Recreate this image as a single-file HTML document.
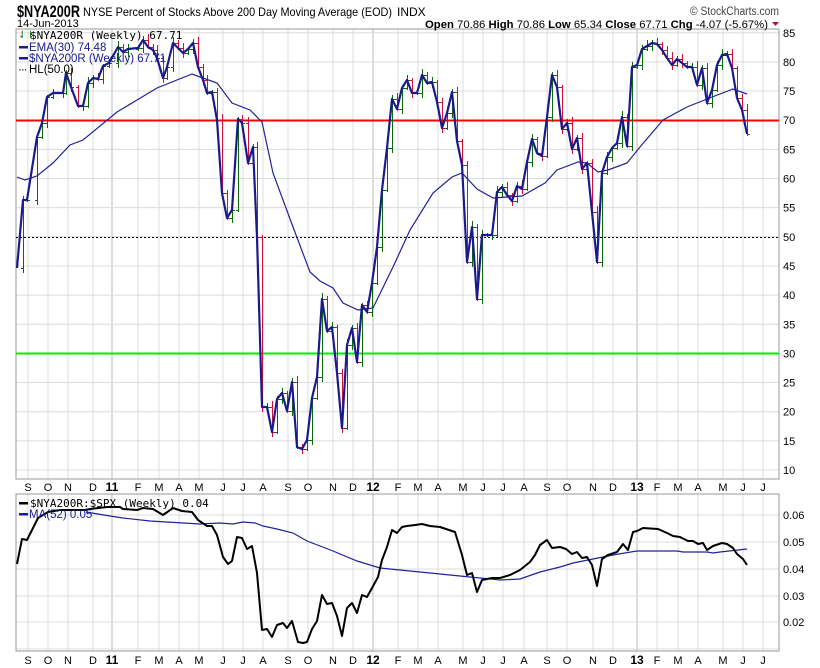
<!DOCTYPE html>
<html><head><meta charset="utf-8"><style>
html,body{margin:0;padding:0;background:#fff;}
body{width:820px;height:668px;overflow:hidden;}
svg{display:block;}
text{font-family:"Liberation Sans",sans-serif;}
.m{font-family:"DejaVu Sans Mono","Liberation Mono",monospace;}
</style></head><body>
<svg id="s" width="820" height="668" xmlns="http://www.w3.org/2000/svg">
<rect width="820" height="668" fill="#fff"/>
<g id="grid"></g>
<rect x="16" y="29" width="763" height="450" fill="none" stroke="#999"/>
<rect x="16" y="494" width="763" height="157" fill="none" stroke="#999"/>
<line x1="16" y1="120.5" x2="779" y2="120.5" stroke="#f00" stroke-width="2"/>
<line x1="16" y1="353.5" x2="779" y2="353.5" stroke="#0e0" stroke-width="2"/>
<line x1="16" y1="237.5" x2="779" y2="237.5" stroke="#000" stroke-width="1" stroke-dasharray="2,2"/>
<g id="bars"></g>
<polyline id="ema" fill="none" stroke="#22229a" stroke-width="1.2"/>
<polyline id="px" fill="none" stroke="#1a1a8c" stroke-width="2.2" stroke-linejoin="round"/>
<polyline id="ma" fill="none" stroke="#22229a" stroke-width="1.2"/>
<polyline id="rt" fill="none" stroke="#000" stroke-width="2" stroke-linejoin="round"/>
<g id="lab" font-size="11" fill="#000"></g>

<text x="17" y="17" font-size="17" font-weight="bold" textLength="63" lengthAdjust="spacingAndGlyphs">$NYA200R</text>
<text x="83" y="16" font-size="12" textLength="309" lengthAdjust="spacingAndGlyphs">NYSE Percent of Stocks Above 200 Day Moving Average (EOD)</text>
<text x="397" y="16" font-size="12">INDX</text>
<text x="17" y="27" font-size="11">14-Jun-2013</text>
<text x="690" y="15" font-size="11.5" fill="#444" textLength="89" lengthAdjust="spacingAndGlyphs">© StockCharts.com</text>
<text x="425" y="28" font-size="11" textLength="343" lengthAdjust="spacingAndGlyphs"><tspan font-weight="bold">Open</tspan> 70.86  <tspan font-weight="bold">High</tspan> 70.86  <tspan font-weight="bold">Low</tspan> 65.34  <tspan font-weight="bold">Close</tspan> 67.71  <tspan font-weight="bold">Chg</tspan> -4.07 (-5.67%)</text>
<polygon points="772,22 779,22 775.5,26" fill="#b0103a"/>

<g font-size="11.5" class="m">
<text x="18" y="38" fill="#060" font-size="10">⇃⇂</text>
<text x="30" y="39" class="m" font-size="11">$NYA200R (Weekly) 67.71</text>
<rect x="19" y="46" width="9" height="2.5" fill="#1a1a8c"/>
<text x="29" y="51" fill="#1a1a8c" font-family="Liberation Sans">EMA(30) 74.48</text>
<rect x="19" y="57" width="9" height="2.5" fill="#1a1a8c"/>
<text x="29" y="62" fill="#1a1a8c" font-family="Liberation Sans">$NYA200R (Weekly) 67.71</text>
<text x="18" y="73" font-family="Liberation Sans" letter-spacing="-1">···</text>
<text x="29" y="73" font-family="Liberation Sans">HL(50.0)</text>
<rect x="19" y="502" width="9" height="2.5" fill="#000"/>
<text x="30" y="507" class="m" font-size="11">$NYA200R:$SPX (Weekly) 0.04</text>
<rect x="19" y="513" width="9" height="2.5" fill="#1a1a8c"/>
<text x="29" y="518" fill="#1a1a8c" font-family="Liberation Sans">MA(52) 0.05</text>
</g>
</svg>
<script>
(function(){
var NS="http://www.w3.org/2000/svg";
function el(p,t,a,txt){var e=document.createElementNS(NS,t);for(var k in a)e.setAttribute(k,a[k]);if(txt!=null)e.textContent=txt;document.getElementById(p).appendChild(e);return e;}
var months=[["S",28],["O",48],["N",68],["D",93],["11",112],["F",138],["M",159],["A",179],["M",199],["J",223],["J",243],["A",263],["S",288],["O",308],["N",333],["D",353],["12",373],["F",398],["M",418],["A",438],["M",463],["J",483],["J",503],["A",524],["S",547],["O",567],["N",593],["D",613],["13",637],["F",657],["M",678],["A",698],["M",723],["J",743],["J",763]];
months.forEach(function(m){
 var yr=m[0].length==2;
 el("grid","line",{x1:m[1],y1:29,x2:m[1],y2:479,stroke:yr?"#b8b8b8":"#dcdcdc"});
 el("grid","line",{x1:m[1],y1:494,x2:m[1],y2:651,stroke:yr?"#b8b8b8":"#dcdcdc"});
 [487,660].forEach(function(y){el("lab","text",{x:m[1],y:y+4,"text-anchor":"middle","font-weight":yr?"bold":"normal","font-size":yr?"12":"11"},m[0]);});
});
for(var v=10;v<=85;v+=5){var y=470-(v-10)*5.83;el("grid","line",{x1:16,y1:y,x2:779,y2:y,stroke:"#dcdcdc"});el("lab","text",{x:783,y:y+4},String(v));}
[[0.06,515],[0.05,542],[0.04,569],[0.03,596],[0.02,622],[0.01,649]].forEach(function(a){el("grid","line",{x1:16,y1:a[1],x2:779,y2:a[1],stroke:"#dcdcdc"});if(a[0]>0.015)el("lab","text",{x:783,y:a[1]+4},a[0].toFixed(2));});
var P=[[17,268],[23,200],[27,200],[37,137],[42,123],[47,97],[53,93],[63,93],[66,73],[71,87],[78,106],[83,106],[88,83],[93,78],[98,79],[103,66],[109,63],[118,47],[123,52],[128,49],[138,48],[143,40],[148,47],[153,50],[157,58],[163,78],[167,67],[173,43],[178,48],[183,53],[188,49],[193,43],[198,67],[203,80],[207,93],[212,92],[217,120],[222,193],[227,218],[232,210],[238,119],[242,123],[248,163],[253,147],[257,237],[262,407],[267,407],[272,432],[277,399],[282,393],[287,411],[292,382],[297,447],[302,449],[307,440],[312,398],[317,377],[322,299],[327,331],[332,327],[337,373],[342,428],[347,345],[352,328],[357,362],[362,305],[367,312],[372,283],[377,247],[382,190],[387,148],[392,99],[397,109],[402,88],[407,80],[412,93],[417,93],[422,75],[427,83],[432,82],[437,102],[442,128],[447,113],[452,92],[457,141],[462,165],[467,262],[472,227],[477,299],[482,235],[487,235],[492,235],[497,192],[502,187],[507,195],[512,201],[517,186],[522,189],[527,162],[532,139],[537,153],[542,156],[547,117],[552,75],[557,87],[562,129],[567,123],[572,149],[577,138],[582,169],[587,163],[592,212],[597,262],[602,173],[607,157],[612,148],[617,143],[622,117],[627,146],[632,67],[637,65],[642,49],[647,46],[652,43],[657,44],[662,50],[667,58],[672,65],[677,59],[682,63],[687,67],[692,67],[697,85],[702,68],[707,103],[712,90],[717,65],[722,55],[727,54],[732,68],[737,98],[742,110],[747,134]];
var E=[[17,177],[25,180],[37,176],[53,163],[70,145],[83,140],[117,112],[137,100],[157,88],[192,74],[217,83],[232,103],[250,110],[262,122],[273,173],[293,227],[310,272],[320,281],[333,288],[343,303],[358,310],[373,308],[393,267],[410,230],[433,193],[452,177],[462,173],[477,189],[493,198],[522,196],[545,183],[557,170],[578,162],[587,163],[598,172],[608,170],[627,163],[640,147],[663,120],[687,107],[707,99],[733,89],[747,94]];
var R=[[17,564],[22,539],[27,540],[38,518],[48,512],[60,510],[75,510],[85,510],[90,509],[107,507],[120,507],[123,509],[137,510],[143,508],[153,509],[163,515],[173,508],[182,511],[192,512],[198,520],[207,526],[212,526],[217,535],[223,557],[228,564],[232,561],[237,537],[242,538],[247,549],[252,546],[257,573],[262,630],[267,629],[272,637],[277,625],[283,623],[287,628],[292,621],[298,642],[303,643],[307,642],[312,629],[317,621],[322,595],[327,604],[332,603],[337,616],[342,636],[347,608],[352,603],[357,613],[362,595],[367,597],[372,588],[378,577],[382,560],[387,547],[392,530],[397,533],[402,527],[407,526],[415,525],[422,524],[430,526],[440,527],[455,532],[462,555],[467,575],[472,573],[477,592],[482,580],[492,578],[500,578],[510,575],[520,570],[530,562],[535,555],[540,545],[547,540],[552,548],[560,547],[566,549],[572,554],[577,552],[582,558],[587,557],[592,565],[597,586],[602,559],[608,555],[617,552],[623,544],[628,550],[633,532],[637,531],[643,528],[658,529],[667,533],[673,536],[680,537],[688,541],[693,541],[698,544],[703,543],[707,550],[713,546],[722,543],[727,544],[733,548],[737,554],[743,559],[747,565]];
var M=[[86,512],[110,516],[123,518],[150,521],[200,524],[220,523],[233,524],[243,522],[255,523],[263,526],[277,529],[293,533],[307,541],[333,551],[357,561],[380,568],[400,570],[410,571],[440,574],[470,577],[500,580],[520,579],[540,572],[560,567],[573,563],[593,559],[613,555],[637,551],[677,551],[683,552],[707,552],[713,553],[720,552],[747,549]];
function pts(a){return a.map(function(p){return p.join(",");}).join(" ");}
document.getElementById("px").setAttribute("points",pts(P));
document.getElementById("ema").setAttribute("points",pts(E));
document.getElementById("rt").setAttribute("points",pts(R));
document.getElementById("ma").setAttribute("points",pts(M));
for(var i=1;i<P.length;i++){
 var o=P[i-1][1],c=P[i][1],x=P[i][0];
 var hi=Math.min(o,c)-2-(i*7%5),lo=Math.max(o,c)+2+(i*3%6);
 var col=c>o?"#d0103a":"#0a6a0a";
 el("bars","line",{x1:x+0.5,y1:hi,x2:x+0.5,y2:lo,stroke:col});
 el("bars","line",{x1:x-2,y1:o+0.5,x2:x+0.5,y2:o+0.5,stroke:col});
 el("bars","line",{x1:x+0.5,y1:c+0.5,x2:x+3,y2:c+0.5,stroke:col});
}
})();
</script>
</body></html>
